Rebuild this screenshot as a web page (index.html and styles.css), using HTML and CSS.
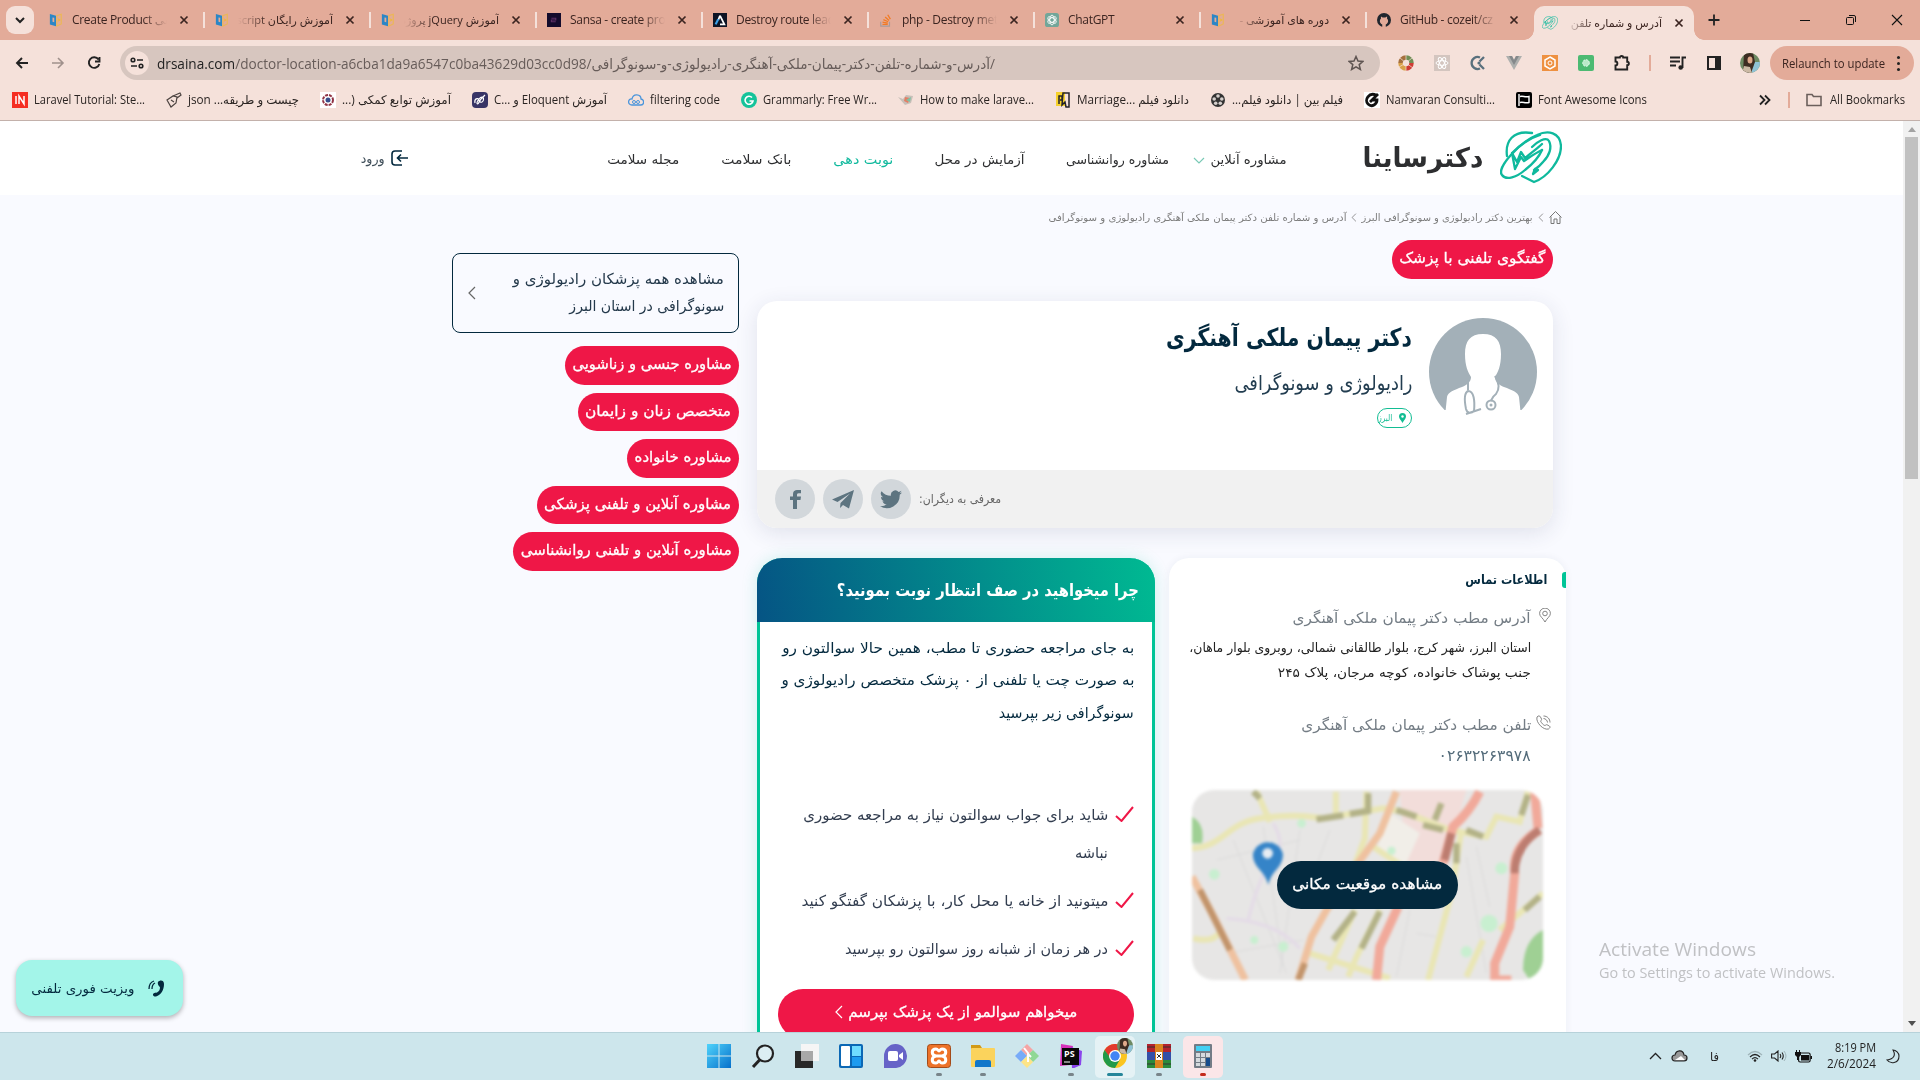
FILE: index.html
```html
<!DOCTYPE html>
<html lang="fa">
<head>
<meta charset="utf-8">
<title>آدرس و شماره تلفن</title>
<link rel="stylesheet" href="styles.css">
</head>
<body>
<svg class="defs" width="0" height="0">
  <symbol id="x" viewBox="0 0 10 10"><path d="M1.5 1.5l7 7M8.500 1.500l-7 7" stroke="#3b2420" stroke-width="1.700" fill="none"/></symbol>
  <symbol id="book" viewBox="0 0 16 16"><path d="M1 1l7 2v12l-7-2z" fill="#2b86c6"/><path d="M4 5l2 .5v5L4 10z" fill="#e3ab99"/><path d="M9 3l5-1.500v11L9 15z" fill="none" stroke="#ecb755" stroke-width="1.300"/><path d="M10.500 6l3 2-3 2z" fill="#efb73e"/></symbol>
  <symbol id="leaf" viewBox="0 0 62 53"><g fill="none" stroke="#0fb99d" stroke-width="2.300" stroke-linejoin="round" stroke-linecap="round"><path d="M7 25C5 10 13-1 32 2"/><path d="M22 45l12 6C48 46 61 29 61 15 60 1 48-1 37 4 20 11-4 37 2 44c4 6 15 2 23-5 9-7 14-13 17-20"/><path d="M12 22l3 16 6-12 3 4c6-4 13-9 18-11M12 22l5 9 4-10 4 6c7-6 13-10 17-14M12 22C20 14 30 7 40 4"/><path d="M32 16c5-5 14-11 17-6 3 6 1 14-6 21-3 4-6 6-9 8h4l-5 4 2-5"/></g></symbol>
  <symbol id="chev" viewBox="0 0 8 14"><path d="M7 1L1 7l6 6" fill="none" stroke="currentColor" stroke-width="1.200"/></symbol>
  <symbol id="check" viewBox="0 0 19 16"><path d="M1 10l5.500 5L18 1" fill="none" stroke="#ef1747" stroke-width="2"/></symbol>
  <symbol id="face" viewBox="0 0 20 20"><clipPath id="fc"><circle cx="10" cy="10" r="10"/></clipPath><g clip-path="url(#fc)"><path fill="#6d8a63" d="M0 0h20v20H0z"/><path fill="#8fc2d5" d="M12 9h8v11h-8z"/><path fill="#3d2c22" d="M4 0h9l2 9-4 11H3z"/><ellipse cx="10" cy="7" rx="2.500" ry="3.500" fill="#dfa98a"/><path d="M4 13l6 1 2 6H2z" fill="#cbb9a4"/></g></symbol>
</svg>

<div class="tabstrip">
  <span class="tabsearch"><svg width="10" height="7" viewBox="0 0 10 7"><path d="M1 1l4 4 4-4" fill="none" stroke="#222" stroke-width="2"/></svg></span>
  <div class="tab"><svg class="fav"><use href="#book"/></svg><span class="title" dir="ltr">Create Product سی</span><svg class="close"><use href="#x"/></svg></div>
  <div class="tab"><svg class="fav"><use href="#book"/></svg><span class="title rt" dir="rtl">آموزش رایگان script</span><svg class="close"><use href="#x"/></svg></div>
  <div class="tab"><svg class="fav"><use href="#book"/></svg><span class="title rt" dir="rtl">آموزش jQuery پروژه</span><svg class="close"><use href="#x"/></svg></div>
  <div class="tab"><svg class="fav" viewBox="0 0 16 16"><path fill="#130b2c" d="M0 0h16v16H0z"/><path d="M5 6h5v2H5v2h5" fill="none" stroke="#5d3166" stroke-width="1.300"/></svg><span class="title">Sansa - create pro</span><svg class="close"><use href="#x"/></svg></div>
  <div class="tab"><svg class="fav" viewBox="0 0 16 16"><path fill="#0d1425" d="M0 0h16v16H0z"/><path d="M8 3l5 10H8M8 3L6 8" fill="none" stroke="#fff" stroke-width="2"/><path d="M6 7l-3 6" stroke="#3ba0e8" stroke-width="2.500"/></svg><span class="title">Destroy route lead</span><svg class="close"><use href="#x"/></svg></div>
  <div class="tab"><svg class="fav" viewBox="0 0 16 16"><path d="M2 10v5h10v-5" fill="none" stroke="#a99a98" stroke-width="1.300"/><path d="M4 13h6M4 10.500l6 1M5 7.500l5.500 2.500M7 4.500l4.500 4M10 2l3 5" stroke="#f27b25" stroke-width="1.500"/></svg><span class="title">php - Destroy met</span><svg class="close"><use href="#x"/></svg></div>
  <div class="tab"><svg class="fav" viewBox="0 0 16 16"><rect width="16" height="16" rx="3" fill="#72a699"/><g fill="none" stroke="#fff"><ellipse cx="8" cy="8" rx="2.500" ry="5.500"/><ellipse cx="8" cy="8" rx="2.500" ry="5.500" transform="rotate(60 8 8)"/><ellipse cx="8" cy="8" rx="2.500" ry="5.500" transform="rotate(120 8 8)"/></g></svg><span class="title">ChatGPT</span><svg class="close"><use href="#x"/></svg></div>
  <div class="tab"><svg class="fav"><use href="#book"/></svg><span class="title rt" dir="rtl">دوره های آموزشی - </span><svg class="close"><use href="#x"/></svg></div>
  <div class="tab"><svg class="fav" viewBox="0 0 16 16"><circle cx="8" cy="8" r="8" fill="#20262e"/><path d="M6 16v-3c-3-1-3.500-5-1.500-6.500V4l2 1h3l2-1v2.500C13.500 8 13 12 10 13v3z" fill="#e3ab99"/></svg><span class="title">GitHub - cozeit/cz</span><svg class="close"><use href="#x"/></svg></div>
  <div class="tab active"><svg class="fav"><use href="#leaf"/></svg><span class="title rt" dir="rtl">آدرس و شماره تلفن</span><svg class="close"><use href="#x"/></svg></div>
  <svg class="plus" viewBox="0 0 12 12"><path d="M6 .5v11M.5 6h11" stroke="#222" stroke-width="1.800"/></svg>
  <div class="winctl">
    <svg viewBox="0 0 12 12"><path d="M1 6.500h10" stroke="#111"/></svg>
    <svg viewBox="0 0 12 12"><rect x="1.500" y="3.500" width="7" height="7" rx="1" fill="none" stroke="#111"/><path d="M4 1.500h5q1.500 0 1.500 1.500v5" fill="none" stroke="#111"/></svg>
    <svg viewBox="0 0 12 12"><path d="M1 1l10 10M11 1L1 11" stroke="#111" stroke-width="1.100"/></svg>
  </div>
</div>

<div class="toolbar">
  <svg class="back" viewBox="0 0 14 12"><path d="M13 6H2M7 1L2 6l5 5" fill="none" stroke="#222" stroke-width="1.900"/></svg>
  <svg class="fwd" viewBox="0 0 14 12"><path d="M1 6h11M7 1l5 5-5 5" fill="none" stroke="#a0918c" stroke-width="1.600"/></svg>
  <svg class="reload" viewBox="0 0 14 14"><path d="M11.500 3.500A5.300 5.300 0 1 0 12.300 8M12.500 1v4.500H8" fill="none" stroke="#222" stroke-width="1.900"/></svg>
  <div class="omni">
    <span class="site"><svg width="14" height="14" viewBox="0 0 14 14"><g fill="none" stroke="#222" stroke-width="1.600"><circle cx="3" cy="4" r="1.800"/><path d="M7 4h6M1 10h6"/><circle cx="11" cy="10" r="1.800"/></g></svg></span>
    <span class="t url" data-w="838"><b>drsaina.com</b>/doctor-location-a6cba1da9a6547c0ba43629d03cc0d98/آدرس-و-شماره-تلفن-دکتر-پیمان-ملکی-آهنگری-رادیولوژی-و-سونوگرافی/&lrm;</span>
    <svg class="star" viewBox="0 0 16 16"><path d="M8 1.500l2 4.500 5 .4-3.800 3.200 1.200 4.900L8 11.900l-4.400 2.600 1.200-4.900L1 6.400 6 6z" fill="none" stroke="#5f5552" stroke-width="1.500"/></svg>
  </div>
  <div class="exts">
    <svg viewBox="0 0 16 16"><g fill="none" stroke-width="4.500"><path d="M8 2.500A5.500 5.500 0 0 1 13.500 8" stroke="#6f8e54"/><path d="M13.500 8A5.500 5.500 0 0 1 8 13.500" stroke="#cf3b33"/><path d="M8 13.500A5.500 5.500 0 0 1 2.500 8" stroke="#d9a24a"/><path d="M2.500 8A5.500 5.500 0 0 1 8 2.500" stroke="#a5703d"/></g><path d="M8 8V0M8 8v8M8 8L2 3M8 8l6-5M8 8l7 5M8 8l-7 4" stroke="#f4e1da" stroke-width=".7"/></svg>
    <svg viewBox="0 0 16 16"><path fill="#d3c5bf" d="M0 0h16v16H0z"/><g fill="none" stroke="#fff"><ellipse cx="8" cy="8" rx="6" ry="2.300"/><ellipse cx="8" cy="8" rx="6" ry="2.300" transform="rotate(60 8 8)"/><ellipse cx="8" cy="8" rx="6" ry="2.300" transform="rotate(120 8 8)"/></g></svg>
    <svg viewBox="0 0 16 16"><path d="M10 2.500A6 6 0 1 0 10 13.500M14 2L9.500 6.500M14 14L9.500 9.500" fill="none" stroke="#59707d" stroke-width="2.300"/><circle cx="9" cy="8" r="1.600" fill="#59707d"/></svg>
    <svg viewBox="0 0 16 16"><path d="M0 1h6l2 4 2-4h6L8 15z" fill="#aeb0ae"/><path d="M3 1h3l2 4 2-4h3L8 10z" fill="#85898b"/></svg>
    <svg viewBox="0 0 16 16"><path fill="#ee9141" d="M0 0h16v16H0z"/><path d="M8 2l5 3v6l-5 3-5-3V5z" fill="none" stroke="#fff" stroke-width="1.500"/><circle cx="8" cy="8" r="2" fill="none" stroke="#fff"/></svg>
    <svg viewBox="0 0 16 16"><rect width="16" height="16" rx="2" fill="#4cba72"/><circle cx="8" cy="8" r="3.300" fill="#b9e9c9" stroke="#e4fbec" stroke-dasharray="2 1"/></svg>
    <svg viewBox="0 0 16 16"><path d="M1.500 2.500h4.300c0-2 3.400-2 3.400 0h4v4.300c2.200 0 2.200 3.400 0 3.400v4.300H1.500v-4c2.500 0 2.500-4 0-4z" fill="none" stroke="#222" stroke-width="1.900"/></svg>
    <i class="bar"></i>
    <svg viewBox="0 0 16 16"><path d="M0 2.500h10M0 6.500h10M0 10.500h6M12.500 13V2.500H16" fill="none" stroke="#222" stroke-width="1.900"/><circle cx="10.700" cy="12.500" r="2.300" fill="#222"/></svg>
    <svg viewBox="0 0 16 16"><path d="M2 2h12v12H2z" fill="none" stroke="#222" stroke-width="2"/><path d="M9 2h5v12H9z" fill="#222"/></svg>
    <svg class="me"><use href="#face"/></svg>
  </div>
  <div class="relaunch"><span class="t" data-w="103">Relaunch to update</span><i class="dots"></i></div>
</div>

<div class="bookmarks">
  <svg viewBox="0 0 16 16"><path fill="#f52e22" d="M0 0h16v16H0z"/><path d="M4 4v8M7 12V4l5 8V4" fill="none" stroke="#fff" stroke-width="1.500"/></svg><span class="t" data-w="111">Laravel Tutorial: Ste...</span>
  <svg viewBox="0 0 16 16"><path d="M1 8l6-4 4 1-1 6-5 4zM7 4l7-3 1 2-4 3M5 8l3 2" fill="none" stroke="#4c4340" stroke-width="1.200"/></svg><span class="t" data-w="111">json ...چیست و طریقه</span>
  <svg viewBox="0 0 16 16"><path fill="#fff" d="M0 0h16v16H0z"/><circle cx="8" cy="8" r="5" fill="none" stroke="#913445" stroke-width="2" stroke-dasharray="3 1"/><circle cx="8" cy="8" r="2.500" fill="#374d8b"/></svg><span class="t" data-w="109">&lrm;...) آموزش توابع کمکی</span>
  <svg viewBox="0 0 16 16"><rect width="16" height="16" rx="4" fill="#383466"/><path d="M3 11c-1-4 3-6 4-3s-2 5-2 3 3-6 5-6 2 4 0 5-3-1-1-3 3-3 4-4" fill="none" stroke="#fff" stroke-width="1.200"/></svg><span class="t" data-w="113">C... و Eloquent آموزش</span>
  <svg viewBox="0 0 16 16"><path d="M4 13C-1 13 0 6 4 7c1-6 9-5 9 0 4 1 3 6 0 6z" fill="none" stroke="#4b95db" stroke-width="1.300"/><circle cx="6" cy="10" r="1.500" fill="none" stroke="#4b95db"/><circle cx="10" cy="10" r="1.500" fill="none" stroke="#4b95db"/></svg><span class="t" data-w="70">filtering code</span>
  <svg viewBox="0 0 16 16"><circle cx="8" cy="8" r="8" fill="#15c39a"/><path d="M11 5.500A4 4 0 1 0 12 9H8.500" fill="none" stroke="#fff" stroke-width="1.600"/></svg><span class="t" data-w="114">Grammarly: Free Wr...</span>
  <svg viewBox="0 0 16 16"><path d="M0 5l5 2 3-4 7 1-2 7-6 2z" fill="#c8bfb8"/><path d="M7 5l5 1-2 5-4-2z" fill="#e47d63"/><path d="M8 8l5-3-1 5z" fill="#7cc2a4"/></svg><span class="t" data-w="114">How to make larave...</span>
  <svg viewBox="0 0 16 16"><path fill="#f6d12d" d="M1 0h9v14H1z"/><path d="M4 12V4h3v4H5M8 1h6v14h-3l-1-5-3 3z" fill="none" stroke="#23222b" stroke-width="1.500"/></svg><span class="t" data-w="112">Marriage... دانلود فیلم</span>
  <svg viewBox="0 0 16 16"><circle cx="8" cy="8" r="7" fill="#333"/><g fill="#d5cfcc"><circle cx="8" cy="4" r="1.800"/><circle cx="4.200" cy="7" r="1.800"/><circle cx="11.800" cy="7" r="1.800"/><circle cx="5.700" cy="11.300" r="1.800"/><circle cx="10.300" cy="11.300" r="1.800"/></g></svg><span class="t" data-w="111">&lrm;...فیلم بین | دانلود فیلم</span>
  <svg viewBox="0 0 16 16"><path fill="#fff" d="M0 0h16v16H0z"/><path d="M12 3C5 0 0 8 4 12s9 0 9-4H8M6 10l8-8" fill="none" stroke="#111" stroke-width="2.800"/></svg><span class="t" data-w="109">Namvaran Consulti...</span>
  <svg viewBox="0 0 16 16"><rect width="16" height="16" rx="2" fill="#000"/><path d="M3 2v12M4 4.500c3-1 5 1 9 0v6c-4 1-6-1-9 0" fill="none" stroke="#fff" stroke-width="1.400"/></svg><span class="t" data-w="109">Font Awesome Icons</span>
  <span class="allbm"><svg viewBox="0 0 12 12"><path d="M1 1.500L5.500 6 1 10.500M6 1.500L10.500 6 6 10.500" fill="none" stroke="#222" stroke-width="1.800"/></svg><i class="bar"></i><svg class="folder" viewBox="0 0 16 14"><path d="M1 1.500h5l1.500 2H15v9H1z" fill="none" stroke="#6b5f5b" stroke-width="1.600"/></svg><span class="t" data-w="75">All Bookmarks</span></span>
</div>

<div class="view">
<div class="page" dir="rtl">
  <header class="header">
    <svg class="logo"><use href="#leaf"/></svg>
    <span class="t brand" data-w="121">دکترساینا</span>
    <nav class="nav">
      <span class="drop"><span class="t" data-w="76">مشاوره آنلاین</span><svg width="12" height="7" viewBox="0 0 12 7"><path d="M1 1l5 5 5-5" fill="none" stroke="#79c9b5" stroke-width="1.200"/></svg></span>
      <span class="t" data-w="103">مشاوره روانشناسی</span>
      <span class="t" data-w="90">آزمایش در محل</span>
      <span class="t on" data-w="60">نوبت دهی</span>
      <span class="t" data-w="70">بانک سلامت</span>
      <span class="t" data-w="72">مجله سلامت</span>
    </nav>
    <div class="login"><svg width="17" height="16" viewBox="0 0 17 16"><path d="M11 1H4Q1 1 1 4v8q0 3 3 3h7M17 8H7M10 4.500L6.500 8l3.500 3.500" fill="none" stroke="#03293e" stroke-width="1.600"/></svg><span class="t" data-w="24">ورود</span></div>
  </header>

  <div class="crumbs">
    <svg width="13" height="13" viewBox="0 0 13 13"><path d="M.5 6.500l6-6 6 6M2 5.500v7h3V8h3v4.500h3v-7" fill="none" stroke="#777" /></svg>
    <svg class="cc"><use href="#chev"/></svg>
    <span class="t" data-w="171">بهترین دکتر رادیولوژی و سونوگرافی البرز</span>
    <svg class="cc"><use href="#chev"/></svg>
    <span class="t" data-w="298">آدرس و شماره تلفن دکتر پیمان ملکی آهنگری رادیولوژی و سونوگرافی</span>
  </div>

  <main class="cols">
    <div class="primary">
      <a class="pill"><span class="t" data-w="146">گفتگوی تلفنی با پزشک</span></a>
      <section class="doctor">
        <div class="info">
          <svg class="avatar" viewBox="0 0 108 108"><clipPath id="av"><circle cx="54" cy="54" r="54"/></clipPath><g clip-path="url(#av)"><path fill="#a3b0b8" d="M0 0h108v92H0z"/><path fill="#fff" d="M54 16c13 0 18 7 18 20 0 12-3 18-6 23 0 5 4 8 9 10 8 3 14 5 15 10l3 29H15l3-29c1-5 7-7 15-10 5-2 9-5 9-10-3-5-6-11-6-23 0-13 5-20 18-20z"/></g><g fill="none" stroke="#a3b0b8" stroke-width="2"><path d="M39 60v12M39 73c-4 2-4 8-2 18 1 4 5 5 8 2 1-10 0-20-6-20zM37 96l15-5M66 58c5 8 4 14 1 18-4 3-4 5-5 7"/><circle cx="62" cy="87" r="4.500"/></g><circle cx="62" cy="87" r="1.500" fill="#a3b0b8"/></svg>
          <div class="who">
            <h1><span class="t" data-w="246">دکتر پیمان ملکی آهنگری</span></h1>
            <h2><span class="t" data-w="178">رادیولوژی و سونوگرافی</span></h2>
            <span class="city"><svg width="7" height="10" viewBox="0 0 7 10"><path d="M3.500 10C2 7 0 5.500 0 3.500a3.500 3.500 0 0 1 7 0C7 5.500 5 7 3.500 10z" fill="#12bd93"/><circle cx="3.500" cy="3.500" r="1.200" fill="#fff"/></svg><span class="t" data-w="14">البرز</span></span>
          </div>
        </div>
        <div class="share">
          <span class="t" data-w="82">معرفی به دیگران:</span>
          <i class="soc"><svg width="22" height="19" viewBox="0 0 24 20"><path d="M24 2.400c-.9.400-1.800.6-2.800.8 1-.6 1.800-1.600 2.200-2.700-1 .6-2 1-3.100 1.200A4.900 4.900 0 0 0 11.900 6 14 14 0 0 1 1.700.900a4.900 4.900 0 0 0 1.500 6.600c-.8 0-1.600-.2-2.200-.6 0 2.400 1.600 4.400 3.900 4.900-.7.200-1.500.2-2.200.1a4.900 4.900 0 0 0 4.600 3.400A9.900 9.900 0 0 1 0 17.300a14 14 0 0 0 21.500-12.400c1-.7 1.800-1.600 2.500-2.500z" fill="#5d7480"/></svg></i>
          <i class="soc"><svg width="22" height="19" viewBox="0 0 22 19"><path d="M22 0L0 9.500l5.500 2.500L18 3.500 8.500 13l-.500 5 3-3 6 3.500z" fill="#5d7480"/></svg></i>
          <i class="soc"><svg width="11" height="19" viewBox="0 0 11 19"><path d="M3 19v-9H0V6.500h3V4c0-3 2-4 4-4h4v3.300H8.500C7.300 3.300 7 4 7 5v1.500h4L10.500 10H7v9z" fill="#5d7480"/></svg></i>
        </div>
      </section>

      <div class="pair">
        <section class="contact">
          <h3><span class="t" data-w="82">اطلاعات تماس</span></h3>
          <div class="lab"><svg width="12" height="15" viewBox="0 0 12 15"><path d="M6 14C4 10 .6 8.500.6 5.500a5.400 5.400 0 0 1 10.800 0C11.400 8.500 8 10 6 14z" fill="none" stroke="#777" stroke-width=".9"/><circle cx="6" cy="5.500" r="2.300" fill="none" stroke="#777" stroke-width=".9"/></svg><span class="t" data-w="238">آدرس مطب دکتر پیمان ملکی آهنگری</span></div>
          <p class="addr"><span class="t" data-w="342">استان البرز، شهر کرج، بلوار طالقانی شمالی، روبروی بلوار ماهان،</span><span class="t" data-w="253">جنب پوشاک خانواده، کوچه مرجان، پلاک ۲۴۵</span></p>
          <div class="lab phone"><svg width="15" height="15" viewBox="0 0 15 15"><path d="M1 2C2.500.500 3.500.500 4.500 2l1 2c.5 1-.8 1.500-.8 2.300C5.500 8 7 9.800 8.800 10.500c.8 0 1.500-1.200 2.300-.7l2.200 1.200c1.500 1 .5 2-.8 3C7.500 15.500-.5 7.500 1 2zM7.500 3.500c2 0 4 2 4 4M7.500 1c4 0 6.500 3 6.500 6.500" fill="none" stroke="#777" stroke-width=".9"/></svg><span class="t" data-w="230">تلفن مطب دکتر پیمان ملکی آهنگری</span></div>
          <p class="tel"><span class="t" data-w="92">۰۲۶۳۲۲۶۳۹۷۸</span></p>
          <div class="map">
            <svg class="mapimg" viewBox="126 750 1054 570" preserveAspectRatio="none">
              <path fill="#e7e6e5" d="M126 750h1054v570H126z"/>
              <path fill="#f2ddda" d="M750 750h200l-70 240h-110z"/><path fill="#f1eee8" d="M720 820l90 60-50 110-80-60z"/>
              <g fill="none" stroke="#dadada" stroke-width="3"><path d="M250 900l160 400M340 860l60 420M450 870l-60 430M540 870l-60 160M950 950l60 350M980 920l40 180M780 1110l-40 200M200 960l250-60M230 1240l230-40M800 1180l60 10"/></g>
              <g fill="none" stroke="#e9e6b4" stroke-width="18"><path d="M126 925C220 920 230 850 330 835S480 830 520 835L700 805 760 815 900 870 1010 890 1040 830 1110 845 1135 755M320 755l40 90M558 755v70M650 755l-5 140-30 80M935 870l-30 190-70 260M1180 1060l-130 110M480 1240l240 75M670 920l90 60M690 1110l-70 140-25 60M615 1110l-80 180M1000 1200l-50 110M130 1195q60 15 80-20"/></g>
              <g fill="none" stroke="#b3b287" stroke-width="19"><path d="M500 838l80-12M600 822l55-9V760M740 810l60 20M820 855l60 15M950 870l50 20M875 790l-20 50M310 755l20 20M920 910v60M690 1115l-55 110M615 1115l-65 85M1170 1070l-45 40M1135 765l-20 60"/></g>
              <g fill="none" stroke="#efc19f" stroke-width="22"><path d="M740 755l-50 125-80 110-80 120-45 80-40 130M126 1010l60 110 100 200"/></g>
              <path d="M150 1050l90 180M465 1270l-20 50" stroke="#c2946b" stroke-width="19"/>
              <g fill="none" stroke="#f1a99a" stroke-width="27"><path d="M990 755q-30 60-80 105l-30 110M745 1100l-55 120-10 100M1155 755l10 110M1170 870q-85 50-75 130l-15 160-45 110v50h50"/></g>
              <path d="M905 880l-20 80M1170 870q-75 50-75 130" fill="none" stroke="#bd7d70" stroke-width="24"/>
              <g fill="#c8efd0"><circle cx="455" cy="850" r="13"/><circle cx="193" cy="1003" r="16"/><circle cx="725" cy="932" r="12"/><circle cx="1055" cy="985" r="18"/><circle cx="1018" cy="1150" r="26"/><circle cx="400" cy="1220" r="15"/><circle cx="950" cy="1235" r="17"/><circle cx="313" cy="1200" r="12"/></g>
              <path fill="#9fd094" d="M1180 1170q-60 30-60 120l20 30h40zM126 830q40 20 30 80h-30z"/>
              <path d="M370 850q30 50 15 80-60 80-90 210M230 1135q150 10 220 90" fill="none" stroke="#e4dbe7" stroke-width="10"/>
              <path d="M355 1035C345 990 309 985 309 943a46 46 0 0 1 90 0C399 985 365 990 355 1035z" fill="#3584c8"/><circle cx="353" cy="940" r="16" fill="#e8edf3"/>
            </svg>
            <a class="mapbtn"><span class="t" data-w="150">مشاهده موقعیت مکانی</span></a>
          </div>
        </section>
        <section class="queue">
          <h3><span class="t" data-w="302">چرا میخواهید در صف انتظار نوبت بمونید؟</span></h3>
          <div class="qbody">
            <p><span class="t" data-w="352">به جای مراجعه حضوری تا مطب، همین حالا سوالتون رو</span><span class="t" data-w="353">به صورت چت یا تلفنی از ۰ پزشک متخصص رادیولوژی و</span><span class="t" data-w="135">سونوگرافی زیر بپرسید</span></p>
            <ul>
              <li><svg><use href="#check"/></svg><div><span class="t" data-w="305">شاید برای جواب سوالتون نیاز به مراجعه حضوری</span><span class="t" data-w="33">نباشه</span></div></li>
              <li><svg><use href="#check"/></svg><div><span class="t" data-w="307">میتونید از خانه یا محل کار، با پزشکان گفتگو کنید</span></div></li>
              <li><svg><use href="#check"/></svg><div><span class="t" data-w="263">در هر زمان از شبانه روز سوالتون رو بپرسید</span></div></li>
            </ul>
            <a class="ask"><span class="t" data-w="229">میخواهم سوالمو از یک پزشک بپرسم</span><svg width="8" height="14"><use href="#chev"/></svg></a>
          </div>
        </section>
      </div>
    </div>

    <aside class="side">
      <a class="all"><span><span class="t" data-w="211">مشاهده همه پزشکان رادیولوژی و</span><span class="t" data-w="155">سونوگرافی در استان البرز</span></span><svg width="8" height="14"><use href="#chev"/></svg></a>
      <a class="pill"><span class="t" data-w="159">مشاوره جنسی و زناشویی</span></a>
      <a class="pill"><span class="t" data-w="146">متخصص زنان و زایمان</span></a>
      <a class="pill"><span class="t" data-w="97">مشاوره خانواده</span></a>
      <a class="pill"><span class="t" data-w="187">مشاوره آنلاین و تلفنی پزشکی</span></a>
      <a class="pill"><span class="t" data-w="211">مشاوره آنلاین و تلفنی روانشناسی</span></a>
    </aside>
  </main>
</div>
<div class="scroll"><i class="up"></i><i class="thumb"></i><i class="down"></i></div>
<a class="visit" dir="rtl"><svg width="17" height="17" viewBox="0 0 17 17"><path d="M10 2c2-2.500 6-2 6 2 0 6-3 11-8 12.500-2 .5-4-1.500-2.500-3 1-1 2.500-.5 3.500-1 2-1 3-3 3-5 0-1-3-2.500-2-5.500z" fill="#03293e"/><path d="M1 9C1 5 3 2 6 1M4 9c0-3 1-5 3-6" fill="none" stroke="#03293e" stroke-width="1.300"/></svg><span class="t" data-w="103">ویزیت فوری تلفنی</span></a>
<div class="activate"><span class="t a1" data-w="157">Activate Windows</span><span class="t a2" data-w="236">Go to Settings to activate Windows.</span></div>
</div>

<div class="taskbar">
  <div class="apps">
    <i><svg viewBox="0 0 24 24"><linearGradient id="w" x2="1" y2="1"><stop stop-color="#4fd3fb"/><stop offset="1" stop-color="#0670cb"/></linearGradient><path fill="url(#w)" d="M0 0h11.500v11.500H0zM12.500 0H24v11.500H12.500zM0 12.500h11.500V24H0zM12.500 12.500H24V24H12.500z"/></svg></i>
    <i><svg viewBox="0 0 24 24"><circle cx="14" cy="9.500" r="8" fill="#dceef3" stroke="#222" stroke-width="2.200"/><path d="M8.500 16L2 23" stroke="#222" stroke-width="3"/></svg></i>
    <i><svg viewBox="0 0 24 24"><path fill="#282828" d="M0 7h18v17H0z"/><path fill="#f5f5f5" d="M6 0h18v17H6z"/><path fill="#a8a8a8" d="M6 7h12v10H6z"/></svg></i>
    <i><svg viewBox="0 0 24 24"><rect width="24" height="24" rx="2" fill="#0b68b5"/><rect x="2" y="2" width="9" height="20" rx="1" fill="#fff"/><path fill="#6fdcff" d="M13 2h9v10h-9z"/><path fill="#1c9bf0" d="M13 13h9v9h-9z"/></svg></i>
    <i><svg viewBox="0 0 24 24"><path d="M1 24V12a11.500 12 0 1 1 11 12z" fill="#6663c7"/><rect x="5" y="7" width="10" height="10" rx="2" fill="#fff"/><path d="M16 11l4-3v8l-4-3z" fill="#fff"/></svg></i>
    <i class="dot"><svg viewBox="0 0 24 24"><rect x=".5" y=".5" width="23" height="23" rx="3" fill="#ed7228" stroke="#a34b19"/><path d="M9 12c-5-1-5-7 0-7 2 0 2 2 3 2s1-2 3-2c5 0 5 6 0 7 5 1 5 7 0 7-2 0-2-2-3-2s-1 2-3 2c-5 0-5-6 0-7h6" fill="none" stroke="#fff" stroke-width="3"/></svg></i>
    <i class="dot"><svg viewBox="0 0 24 24"><path fill="#d29a16" d="M0 1h9l2 3v6H0z"/><rect y="4" width="24" height="19" rx="1" fill="#fbd35c"/><path fill="#1177ca" d="M4 23v-5q0-2 2-2h12q2 0 2 2v5z"/></svg></i>
    <i><svg viewBox="0 0 24 24"><path fill="#f5a5a5" d="M12 0l6 6-6 6-6-6z"/><path fill="#90d895" d="M18 6l6 6-6 6-6-6z"/><path fill="#78abf8" d="M6 6l6 6-6 6-6-6z"/><path fill="#fde487" d="M12 12l6 6-6 6-6-6z"/><path d="M9 4l4 5v9M13 10l3 3" stroke="#fff" stroke-width="2" fill="none"/></svg></i>
    <i class="dot"><svg viewBox="0 0 24 24"><path fill="#d633bb" d="M2 0l12 2-3 19-10 1z"/><path fill="#8a45ec" d="M12 3l11 4-1 14-9 4z"/><path fill="#090909" d="M3 4h17v17H3z"/><text x="5" y="13" font-size="9" font-weight="700" fill="#fff">PS</text><path d="M5 18h6" stroke="#fff"/></svg></i>
    <i class="dot cur"><svg viewBox="0 0 24 24"><circle cx="12" cy="12" r="12" fill="#fbc520"/><path d="M1.600 6A12 12 0 0 1 22.400 6H12l-5 9z" fill="#e23a2e"/><path d="M1.600 6A12 12 0 0 0 12 24l5.200-9h-9z" fill="#229a48"/><circle cx="12" cy="12" r="6" fill="#fff"/><circle cx="12" cy="12" r="4.700" fill="#4285f4"/></svg><svg class="mini"><use href="#face"/></svg></i>
    <i class="dot"><svg viewBox="0 0 24 24"><path fill="#b3232d" d="M0 0h24v8H0z"/><path fill="#3350a8" d="M0 8h24v8H0z"/><path fill="#2c8a3c" d="M0 16h24v8H0z"/><path fill="#d9841f" d="M8 0h8v24H8z"/><path d="M9 8h6v8H9z" fill="#fff"/><path d="M10 10l4 4M14 10l-4 4M0 3h8M16 3h8M0 20h8M16 20h8" stroke="#333"/></svg></i>
    <i class="dot red"><svg viewBox="0 0 24 24"><rect x="3" width="18" height="24" rx="1" fill="#737c86"/><path fill="#44d0f3" d="M5 2h14v5H5z"/><path fill="#d5dade" d="M5 9h4v4H5zM10 9h4v4h-4zM15 9h4v4h-4zM5 14h4v4H5zM10 14h4v4h-4zM5 19h4v3H5zM10 19h4v3h-4z"/><path fill="#164c8c" d="M15 14h4v8h-4z"/></svg></i>
  </div>
  <div class="tray">
    <svg width="13" height="8" viewBox="0 0 13 8"><path d="M1 7l5.500-5.500L12 7" fill="none" stroke="#222" stroke-width="1.300"/></svg>
    <svg width="17" height="12" viewBox="0 0 17 12"><path d="M4 11C0 11 0 5 4 5c1-5 8-6 9 0 4 0 4 6 0 6z" fill="#999" stroke="#222" stroke-width="1.200"/><path d="M4 10l6-4 4 4z" fill="#fff"/></svg>
    <span class="t fa" data-w="9">فا</span>
    <svg width="16" height="12" viewBox="0 0 16 12"><g fill="none" stroke="#222" stroke-width="1.200"><path d="M1 5Q8-2 15 5" stroke="#9fb4b9"/><path d="M3 7q5-5 10 0M5 9.200q3-3 6 0"/></g><circle cx="8" cy="10.500" r="1.300" fill="#222"/></svg>
    <svg width="16" height="12" viewBox="0 0 16 12"><path d="M.6 4h3L7 1v10L3.600 8h-3zM9 4q1.500 2 0 4M11 2.500q2.500 3.500 0 7" fill="none" stroke="#222" stroke-width="1.100"/><path d="M13 1q4 5 0 10" fill="none" stroke="#9fb4b9"/></svg>
    <svg width="17" height="13" viewBox="0 0 17 13"><rect x="3.600" y="3" width="11.500" height="9" rx="1.500" fill="none" stroke="#111" stroke-width="1.200"/><path d="M6 5h8v5.500H6zM15.500 6H17v3h-1.500zM0 2h6v3L4 7v3H2V7L0 5zM1 0h1v2H1zM4 0h1v2H4z" fill="#111"/></svg>
    <span class="clock"><span class="t" data-w="41">8:19 PM</span><span class="t" data-w="49">2/6/2024</span></span>
    <svg width="14" height="15" viewBox="0 0 14 15"><path d="M7 1c3 5 1 9-6 10 3 4 12 4 12-4 0-3-3-6-6-6z" fill="none" stroke="#222" stroke-width="1.100"/></svg>
  </div>
</div>
<script src="fit.js"></script>
</body>
</html>
```
FILE: styles.css
```css
* { box-sizing: border-box; }
body { margin: 0; width: 1920px; height: 1080px; overflow: hidden; font-family: "DejaVu Sans", sans-serif; display: flex; flex-direction: column; }
svg { flex: none; display: block; }
.defs { position: absolute; }
h1, h2, h3, p, ul { margin: 0; padding: 0; font-weight: 400; list-style: none; }
i { font-style: normal; display: block; }
.t { display: inline-block; white-space: nowrap; flex: none; transform-origin: left center; }
[dir="rtl"] .t { transform-origin: right center; }

/* browser window */
.tabstrip { height: 40px; flex: none; background: #e3ab99; display: flex; align-items: center; font: 12px "Open Sans", "DejaVu Sans", sans-serif; color: #3b2420; }
.tabsearch { width: 28px; height: 28px; border-radius: 9px; background: #f5e1da; margin: 0 5px 0 6px; display: flex; align-items: center; justify-content: center; flex: none; }
.tab { width: 166px; height: 34px; flex: none; display: flex; align-items: center; padding-left: 10px; position: relative; }
.tab::after { content: ""; width: 2px; height: 16px; background: #f5e1da; margin-left: 14px; }
.tab .fav { width: 14px; height: 16px; margin-right: 9px; }
.title { width: 97px; overflow: hidden; white-space: nowrap; line-height: 24px; letter-spacing: -.3px; mask-image: linear-gradient(90deg, #000 75%, transparent); }
.title.rt { mask-image: linear-gradient(270deg, #000 70%, transparent); font-size: 11px; letter-spacing: 0; }
.close { width: 10px; height: 10px; margin-left: 12px; }
.tab.active { width: 160px; background: #f5e1da; border-radius: 10px 10px 0 0; height: 34px; align-self: flex-end; padding-left: 8px; margin-left: 1px; }
.tab.active .fav { width: 16px; margin-right: 7px; }
.tab.active::after { width: 10px; height: 10px; position: absolute; right: -10px; bottom: 0; margin: 0; background: radial-gradient(circle at 100% 0, transparent 9.500px, #f5e1da 10px); }
.tab.active::before { content: ""; width: 10px; height: 10px; position: absolute; left: -10px; bottom: 0; background: radial-gradient(circle at 0 0, transparent 9.500px, #f5e1da 10px); }
.tab:nth-last-child(4)::after { display: none; }
.plus { width: 12px; height: 12px; margin-left: 14px; }
.winctl { margin-left: auto; display: flex; gap: 34px; padding-right: 17px; }
.winctl svg { width: 12px; height: 12px; }
.toolbar { height: 46px; flex: none; background: #f5e1da; display: flex; align-items: center; padding: 0 6px 0 15px; font: 12px "Open Sans", sans-serif; }
.back, .fwd { width: 14px; height: 12px; margin-right: 22px; }
.reload { width: 14px; height: 14px; margin: 0 19px 0 0; }
.omni { width: 1260px; height: 34px; border-radius: 17px; background: #d7c6bf; display: flex; align-items: center; padding: 0 16px 0 5px; }
.site { width: 24px; height: 24px; border-radius: 12px; background: #f5e1da; display: flex; align-items: center; justify-content: center; margin-right: 8px; }
.url { font: 14px "Open Sans", "DejaVu Sans", sans-serif; color: #675c59; }
.url b { font-weight: 400; color: #222; }
.star { width: 16px; height: 16px; margin-left: auto; }
.exts { display: flex; align-items: center; gap: 20px; margin-left: 18px; }
.exts svg { width: 16px; height: 16px; }
.exts .me { width: 20px; height: 20px; margin-left: -2px; }
.bar { width: 2px; height: 16px; background: #e3ab99; margin: 0 -1px; }
.relaunch { margin-left: auto; width: 144px; height: 34px; border-radius: 17px; background: #e3ab99; display: flex; align-items: center; padding-left: 12px; color: #3b2420; }
.dots { width: 3px; height: 3px; border-radius: 2px; background: #222; margin-left: 12px; box-shadow: 0 -6px #222, 0 6px #222; }
.bookmarks { height: 35px; flex: none; background: #f5e1da; border-bottom: 1px solid #c3b1ab; display: flex; align-items: center; padding: 0 15px 7px 12px; font: 12px "Open Sans", "DejaVu Sans", sans-serif; color: #2a2422; }
.bookmarks > svg { width: 16px; height: 16px; margin-right: 6px; }
.bookmarks > .t + svg { margin-left: 21px; }
.allbm { margin-left: auto; display: flex; align-items: center; }
.allbm svg { width: 12px; height: 12px; }
.allbm .bar { margin: 0 16px 0 17px; }
.allbm .folder { width: 16px; height: 14px; margin-right: 8px; }

/* web page */
.view { flex: 1; min-height: 0; display: flex; overflow: hidden; position: relative; background: #f9faff; }
.page { width: 1903px; height: 911px; overflow: hidden; color: #03293e; }
.scroll { width: 17px; background: #f1f1f1; display: flex; flex-direction: column; align-items: center; padding: 6px 0; }
.up, .down { border: 4px solid transparent; width: 0; height: 0; }
.up { border-bottom: 5px solid #a3a3a3; border-top: 0; }
.down { border-top: 5px solid #505050; border-bottom: 0; margin-top: auto; }
.thumb { width: 13px; height: 342px; background: #c1c1c1; margin-top: 5px; }
.header { height: 74px; background: #fff; display: flex; align-items: center; padding: 0 341px 0 361px; }
.logo { width: 62px; height: 53px; margin-top: -1px; }
.brand { font-size: 27px; font-weight: 700; color: #2d2e30; margin-right: 17px; line-height: 40px; }
.nav { display: flex; gap: 41.700px; margin-right: 75px; font-size: 13px; line-height: 20px; color: #2d2e30; margin-top: 4px; }
.drop { display: flex; align-items: center; gap: 6px; margin-left: -18px; }
.on { color: #0fb99d; }
.login { margin-right: auto; display: flex; align-items: center; gap: 6px; font-size: 13px; color: #41505b; }
.crumbs { height: 45px; display: flex; align-items: center; padding-right: 341px; font-size: 10px; color: #7d7d7d; }
.cc { width: 6px; height: 9px; color: #777; margin: 0 5px; }
.cols { display: flex; padding-right: 337px; gap: 18px; }
.primary { width: 809px; }
.pill { display: flex; align-items: center; height: 38.500px; width: fit-content; border-radius: 20px; background: #ef1747; color: #fff; font-size: 15px; padding: 0 7.500px 2.500px; -webkit-text-stroke: .3px #fff; }
.primary > .pill { margin-right: 13px; height: 39px; }
.doctor { width: 796px; height: 227px; margin: 22px 13px 0 0; background: #fff; border-radius: 20px; box-shadow: 0 5px 22px rgba(40,50,90,.12); display: flex; flex-direction: column; overflow: hidden; }
.info { flex: 1; display: flex; gap: 17px; padding: 17px 16px 0 0; }
.avatar { width: 108px; height: 108px; }
.who h1 { line-height: 40px; font-size: 25px; }
.who h1 .t { font-weight: 700; }
.who h2 { font-size: 20px; line-height: 30px; margin: 10px 0; color: #223d50; height: 30px; }
.city { display: flex; align-items: center; gap: 7px; width: 35px; height: 20px; border: 1.500px solid #12bd93; border-radius: 10px; padding: 0 5px 0 0; color: #12bd93; font-size: 9px; }
.share { height: 58px; background: #f1f1f1; display: flex; align-items: center; justify-content: flex-end; padding-left: 18px; gap: 8px; color: #666; font-size: 12px; }
.soc { width: 40px; height: 40px; border-radius: 20px; background: #d2d7db; display: flex; align-items: center; justify-content: center; }
.pair { display: flex; justify-content: space-between; margin-top: 30px; }
.contact { width: 397px; height: 500px; background: #fff; border-radius: 20px; box-shadow: 0 0 8px rgba(40,50,90,.06); padding: 12px 15px 0; }
.contact h3 { font-size: 13px; line-height: 20px; margin-right: 4px; position: relative; }
.contact h3 .t { font-weight: 700; }
.contact h3::before { content: ""; position: absolute; right: -19px; top: 2px; width: 4px; height: 16px; background: #00c497; border-radius: 3px 0 0 3px; }
.lab { display: flex; height: 30px; margin-top: 13px; position: relative; font-size: 15px; line-height: 30px; color: #747d85; padding-right: 20px; }
.lab svg { position: absolute; right: 0; top: 5px; }
.addr { padding-right: 20px; font-size: 13px; line-height: 25px; color: #222; display: flex; flex-direction: column; align-items: flex-start; margin-top: 2px; margin-bottom: 25px; }
.tel { padding-right: 20px; font-size: 16px; line-height: 26px; color: #536b7a; margin-top: 3px; }
.lab.phone { margin-top: 0; }
.map { margin: 21px 8px 0; width: 351px; height: 190px; position: relative; }
.mapimg { width: 351px; height: 190px; border-radius: 22px; filter: blur(1.500px); }
.mapbtn { position: absolute; left: 85px; top: 71px; width: 181px; height: 48px; border-radius: 24px; background: #03293e; color: #fff; font-size: 15px; display: flex; align-items: center; justify-content: center; padding-bottom: 3px; -webkit-text-stroke: .3px #fff; }
.queue { width: 398px; height: 510px; border-radius: 25px; border: 3px solid #00c497; border-top: 0; background: #fff; box-shadow: 0 0 16px rgba(0,196,151,.18); }
.queue h3 { height: 64px; margin: 0 -3px; border-radius: 25px 25px 0 0; background: linear-gradient(80deg, #055484, #00ba92); padding: 14px 16px; line-height: 36px; color: #fff; font-size: 17px; }
.queue h3 .t { font-weight: 700; }
.qbody { padding: 10px 18px 0; }
.qbody p { display: flex; flex-direction: column; font-size: 15px; line-height: 32.300px; height: 97px; align-items: flex-start; }
.qbody ul { margin-top: 68px; display: flex; flex-direction: column; gap: 10.500px; font-size: 15px; line-height: 37.500px; color: #333e50; }
.qbody li { display: flex; }
.qbody li svg { width: 19px; height: 16px; margin: 9px 0 0 7px; }
.qbody li div { display: flex; flex-direction: column; align-items: flex-start; }
.ask { height: 50px; width: 356px; border-radius: 25px; background: #ef1747; color: #fff; font-size: 15px; display: flex; align-items: center; justify-content: center; gap: 5px; margin-top: 21px; padding-bottom: 4px; -webkit-text-stroke: .3px #fff; }
.side { width: 287px; padding-top: 13px; display: flex; flex-direction: column; gap: 8px; }
.all { height: 80px; border: 1.500px solid #03293e; border-radius: 8px; display: flex; align-items: center; justify-content: space-between; padding: 0 14px 0 15px; font-size: 15px; line-height: 27px; color: #24394b; margin-bottom: 5px; }
.all > span { display: flex; flex-direction: column; align-items: flex-start; }
.all svg { color: #666; }
.visit { position: absolute; left: 16px; top: 839px; width: 167px; height: 56px; border-radius: 16px; background: #a3f5e9; box-shadow: 0 2px 5px rgba(0,0,0,.3); display: flex; align-items: center; gap: 14px; padding: 0 18px 0 0; font-size: 13px; color: #03293e; }
.activate { position: absolute; left: 1599px; top: 814px; font-family: "Open Sans", sans-serif; color: #c0c1c4; display: flex; flex-direction: column; align-items: flex-start; }
.a1 { font-size: 19px; line-height: 28px; }
.a2 { font-size: 14px; line-height: 20px; }

/* taskbar */
.taskbar { height: 48px; flex: none; background: #cde6ec; border-top: 1px solid #b7d2da; display: flex; padding: 3px 20px 0 699px; font-family: "Open Sans", "DejaVu Sans", sans-serif; color: #222; }
.apps { display: flex; gap: 4px; }
.apps > i { width: 40px; height: 42px; padding: 8px 8px 0; position: relative; border-radius: 5px; }
.apps svg { width: 24px; height: 24px; }
.apps svg.mini { position: absolute; right: 2px; top: 2px; width: 16px; height: 16px; }
.apps > i::before { content: ""; position: absolute; left: 17px; bottom: 2px; width: 6px; height: 3px; border-radius: 2px; }
.dot::before { background: #788489; }
.cur { background: #e5f2f5; }
.apps > .cur::before { background: #26869a; width: 16px; left: 12px; }
.apps > .red { background: #fbe6e8; }
.red::before { background: #c42b1c; }
.tray { margin-left: auto; display: flex; align-items: center; height: 40px; font-size: 12px; }
.tray > svg:nth-child(2) { margin: 0 22px 0 9px; }
.tray > svg:nth-child(4) { margin-left: 28px; }
.tray > svg:nth-child(5) { margin: 0 8px; }
.clock { width: 64px; display: flex; flex-direction: column; align-items: flex-end; line-height: 16px; margin-right: 10px; }
```
FILE: fit.js
```js
document.querySelectorAll('.t[data-w]').forEach(function (el) {
  var natural = el.getBoundingClientRect().width;
  var width = Number(el.dataset.w);
  var rtl = el.closest('[dir="rtl"]');
  el.style.transform = 'scaleX(' + width / natural + ')';
  el.style[rtl ? 'marginLeft' : 'marginRight'] = width - natural + 'px';
});
```
